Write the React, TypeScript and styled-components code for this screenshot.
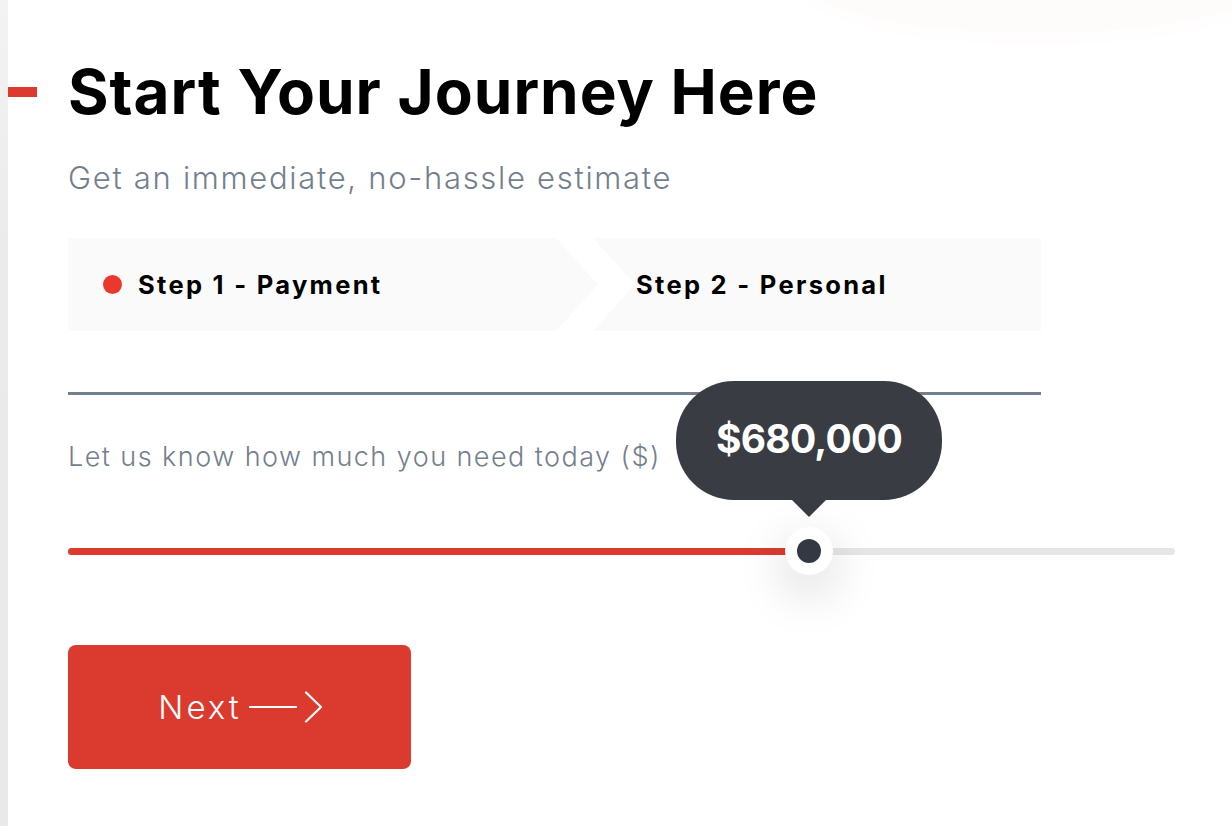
import React from "react";
import styled, { createGlobalStyle } from "styled-components";

const GlobalStyle = createGlobalStyle`
  html, body { margin: 0; padding: 0; background: #ffffff; }
  body { font-family: "Inter", "Liberation Sans", sans-serif; overflow: hidden; }
  * { box-sizing: border-box; }
`;

const Page = styled.div`
  position: relative;
  display: flex;
  width: 1232px;
  height: 826px;
  background: #ffffff;
  overflow: hidden;
`;

const TopGlow = styled.div`
  position: absolute;
  top: -75px;
  right: -40px;
  width: 470px;
  height: 108px;
  border-radius: 50%;
  background: #fefbfb;
  box-shadow: 0 0 20px 8px #fffdfd;
`;

const LeftStrip = styled.div`
  flex: 0 0 8px;
  height: 100%;
  background: linear-gradient(180deg, #f3f3f3 0%, #ebebeb 30%, #e9e9e9 100%);
`;

const Main = styled.main`
  position: relative;
  flex: 1;
  padding: 55px 0 0 60px;
  display: flex;
  flex-direction: column;
`;

const HeadingRow = styled.div`
  display: flex;
  align-items: center;
  gap: 31px;
  margin-left: -60px;
`;

const Dash = styled.span`
  display: block;
  width: 29px;
  height: 10px;
  background: #dc3a2f;
`;

const Title = styled.h1`
  margin: 0;
  font-size: 62px;
  line-height: 74px;
  font-weight: 700;
  letter-spacing: 1px;
  color: #000000;
`;

const Subtitle = styled.p`
  margin: 30px 0 0;
  font-size: 31px;
  line-height: 38px;
  font-weight: 300;
  letter-spacing: 1.7px;
  color: #747f8e;
`;

const Steps = styled.div`
  display: flex;
  width: 973px;
  height: 93px;
  margin-top: 41px;
`;

const Step = styled.div<{ $first?: boolean }>`
  display: flex;
  align-items: center;
  height: 100%;
  background: #fafafa;
  ${(p) =>
    p.$first
      ? `
    flex: 0 0 530px;
    padding-left: 35px;
    gap: 16px;
    clip-path: polygon(0 0, calc(100% - 42px) 0, 100% 50%, calc(100% - 42px) 100%, 0 100%);
  `
      : `
    flex: 1;
    margin-left: -5px;
    padding-left: 43px;
    clip-path: polygon(0 0, 100% 0, 100% 100%, 0 100%, 42px 50%);
  `}
`;

const Dot = styled.span`
  display: block;
  width: 19px;
  height: 19px;
  border-radius: 50%;
  background: #ea392c;
`;

const StepLabel = styled.span`
  font-size: 25.5px;
  line-height: 30px;
  font-weight: 700;
  letter-spacing: 2.3px;
  color: #000000;
`;

const Rule = styled.hr`
  margin: 61px 0 0;
  width: 973px;
  height: 3px;
  border: 0;
  background: #737f8d;
`;

const FieldLabel = styled.label`
  display: block;
  margin-top: 45px;
  font-size: 27px;
  line-height: 33px;
  font-weight: 300;
  letter-spacing: 1.45px;
  color: #747f8e;
`;

const SliderWrap = styled.div`
  position: relative;
  width: 1107px;
  height: 48px;
  margin-top: 54px;
  display: flex;
  align-items: center;
`;

const Track = styled.div`
  position: relative;
  width: 100%;
  height: 7px;
  border-radius: 4px;
  background: #e6e6e6;
`;

const Fill = styled.div`
  height: 100%;
  border-radius: 4px 0 0 4px;
  background: #dc3a2f;
`;

const ThumbAnchor = styled.div`
  position: absolute;
  top: 0;
  width: 0;
  height: 48px;
`;

const Thumb = styled.div`
  position: absolute;
  left: -24px;
  top: 0;
  width: 48px;
  height: 48px;
  border-radius: 50%;
  background: #ffffff;
  display: flex;
  align-items: center;
  justify-content: center;
  box-shadow: 0 16px 50px rgba(0, 0, 0, 0.18);
`;

const ThumbCore = styled.span`
  display: block;
  width: 24px;
  height: 24px;
  border-radius: 50%;
  background: #343842;
`;

const Bubble = styled.div`
  position: absolute;
  left: -133px;
  bottom: calc(100% + 27px);
  width: 266px;
  height: 119px;
  border-radius: 58px;
  background: #393c42;
  display: flex;
  align-items: center;
  justify-content: center;
  padding-bottom: 4px;
  &::after {
    content: "";
    position: absolute;
    left: 50%;
    top: 100%;
    transform: translateX(-50%);
    border-left: 17px solid transparent;
    border-right: 17px solid transparent;
    border-top: 17px solid #393c42;
  }
`;

const BubbleText = styled.span`
  font-size: 39px;
  line-height: 46px;
  font-weight: 700;
  letter-spacing: -0.8px;
  color: #ffffff;
`;

const NextButton = styled.button`
  margin-top: 70px;
  width: 343px;
  height: 124px;
  border: 0;
  border-radius: 8px;
  background: #db3a2f;
  color: #ffffff;
  display: flex;
  align-items: center;
  justify-content: center;
  gap: 7px;
  padding: 0 0 0 2px;
  font-family: inherit;
  cursor: pointer;
`;

const ButtonText = styled.span`
  font-size: 33px;
  line-height: 40px;
  font-weight: 300;
  letter-spacing: 3px;
`;

const ArrowIcon = () => (
  <svg width="74" height="32" viewBox="0 0 74 32" fill="none" stroke="#ffffff" strokeWidth="2.2" strokeLinecap="round" strokeLinejoin="round">
    <line x1="1" y1="16" x2="47" y2="16" />
    <polyline points="57,1.5 72,16 57,30.5" />
  </svg>
);

const VALUE = 680000;
const PCT = (741 / 1107) * 100;

export default function App() {
  return (
    <>
      <GlobalStyle />
      <Page>
        <LeftStrip />
        <Main>
          <HeadingRow>
            <Dash />
            <Title>Start Your Journey Here</Title>
          </HeadingRow>
          <Subtitle>Get an immediate, no-hassle estimate</Subtitle>
          <Steps>
            <Step $first>
              <Dot />
              <StepLabel>Step 1 - Payment</StepLabel>
            </Step>
            <Step>
              <StepLabel>Step 2 - Personal</StepLabel>
            </Step>
          </Steps>
          <Rule />
          <FieldLabel>Let us know how much you need today ($)</FieldLabel>
          <SliderWrap>
            <Track>
              <Fill style={{ width: `${PCT}%` }} />
            </Track>
            <ThumbAnchor style={{ left: `${PCT}%` }}>
              <Bubble>
                <BubbleText>${VALUE.toLocaleString("en-US")}</BubbleText>
              </Bubble>
              <Thumb>
                <ThumbCore />
              </Thumb>
            </ThumbAnchor>
          </SliderWrap>
          <NextButton>
            <ButtonText>Next</ButtonText>
            <ArrowIcon />
          </NextButton>
        </Main>
        <TopGlow />
      </Page>
    </>
  );
}
